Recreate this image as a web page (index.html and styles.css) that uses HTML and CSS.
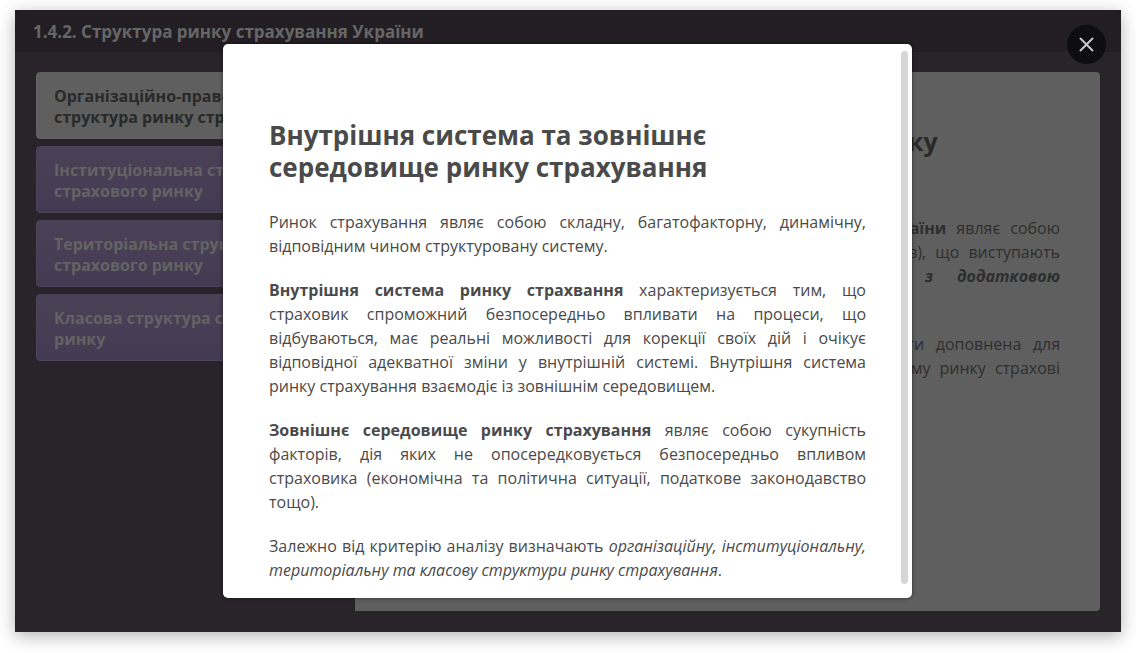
FILE: index.html
```html
<!DOCTYPE html>
<html lang="uk">
<head>
<meta charset="utf-8">
<meta name="viewport" content="width=device-width, initial-scale=1">
<title>Структура ринку страхування України</title>
<link rel="stylesheet" href="styles.css">
</head>
<body>
<div class="stage">
  <header class="topbar">1.4.2. Структура ринку страхування України</header>
  <main class="content">
    <nav class="tabs">
      <button class="tab tab-active" type="button">Організаційно-правова<br>структура ринку страхування</button>
      <button class="tab" type="button">Інституціональна структура<br>страхового ринку</button>
      <button class="tab" type="button">Територіальна структура<br>страхового ринку</button>
      <button class="tab" type="button">Класова структура страхового<br>ринку</button>
    </nav>
    <article class="panel">
      <h1 class="panel-title">Організаційно–правова структура ринку<br>страхування</h1>
      <p class="panel-text"><span class="line"><b>Організаційно-правова структура ринку страхування України</b> являє собою</span>
        <span class="line">сукупність усіх різноманітних страхових компаній (страховиків), що виступають</span>
        <span class="line"><b><i>у формі повних, командитних товариств також з додатковою</i></b></span>
        <b><i>відповідальністю.</i></b></p>
      <p class="panel-text"><span class="line">Організаційна структура ринку страхування також може бути доповнена для</span>
        <span class="line">окремих видів нинішньої страхової діяльності; на вітчизняному ринку страхові</span>
        компанії.</p>
    </article>
  </main>

  <section class="modal" role="dialog" aria-modal="true" aria-labelledby="modal-title">
    <div class="modal-body">
      <h2 class="modal-title" id="modal-title">Внутрішня система та зовнішнє<br>середовище ринку страхування</h2>
      <p class="modal-text">Ринок страхування являє собою складну, багатофакторну, динамічну, відповідним чином структуровану систему.</p>
      <p class="modal-text"><b>Внутрішня система ринку страхвання</b> характеризується тим, що страховик спроможний безпосередньо впливати на процеси, що відбуваються, має реальні можливості для корекції своїх дій і очікує відповідної адекватної зміни у внутрішній системі. Внутрішня система ринку страхування взаємодіє із зовнішнім середовищем.</p>
      <p class="modal-text"><b>Зовнішнє середовище ринку страхування</b> являє собою сукупність факторів, дія яких не опосередковується безпосередньо впливом страховика (економічна та політична ситуації, податкове законодавство тощо).</p>
      <p class="modal-text">Залежно від критерію аналізу визначають <i>організаційну, інституціональну, територіальну та класову структури ринку страхування</i>.</p>
    </div>
    <div class="scrollbar"></div>
  </section>

  <button class="close" type="button" aria-label="Закрити">
    <svg width="15" height="15" viewBox="0 0 15 15" fill="none" stroke="currentColor" stroke-width="2" stroke-linecap="round"><path d="M1.5 1.5l12 12M13.5 1.5l-12 12"/></svg>
  </button>
</div>
</body>
</html>
```

FILE: styles.css
```css
* { box-sizing: border-box; }

body {
  margin: 0;
  padding: 10px 15px 21px;
  background: #fff;
  color: #4a4a4a;
  font-family: "Open Sans", "Noto Sans", sans-serif;
  font-size: 16px;
  line-height: 24px;
}

.stage {
  position: relative;
  display: flex;
  flex-direction: column;
  min-height: calc(100vh - 31px);
  background: #29242a;
  box-shadow: 0 4px 16px rgba(0, 0, 0, 0.3);
}

.topbar {
  padding: 10px 18px 8px;
  background: #231e23;
  color: #666;
  font-size: 17px;
  font-weight: 700;
}

.content {
  display: flex;
  flex: 1;
  padding: 20px 21px 21px;
}

.tabs {
  display: flex;
  flex: 0 0 319px;
  flex-direction: column;
  gap: 7px;
}

.tab {
  padding: 13px 17px 10px;
  border: 1px solid #4e4459;
  border-radius: 4px;
  background: linear-gradient(#4b4156, #443a53);
  color: #636363;
  font: 700 16px/21px "Open Sans", "Noto Sans", sans-serif;
  text-align: left;
  white-space: nowrap;
}

.tab-active {
  border-color: #626262;
  background: #5f5f5f;
  color: #292929;
}

.panel {
  flex: 1;
  padding: 53px 40px 0 46px;
  border-radius: 4px 4px 4px 0;
  background: #5f5f5f;
  color: #2e2e2e;
}

.panel-title {
  margin: 0 0 27px;
  color: #292929;
  font-size: 25px;
  line-height: 32px;
}

.panel-text {
  margin: 0 0 20px;
}

.line {
  display: block;
  text-align: justify;
  text-align-last: justify;
  white-space: nowrap;
}

.modal {
  position: absolute;
  inset: 34px 209px 34px 208px;
  display: flex;
  padding: 7px 4px 14px 46px;
  border-radius: 5px;
  background: #fff;
  box-shadow: 0 0 4px rgba(0, 0, 0, 0.5);
}

.modal-body {
  flex: 1;
  padding: 68px 35px 0 0;
}

.modal-title {
  margin: 0 0 27px;
  font-size: 26px;
  line-height: 32px;
}

.modal-text {
  margin: 0 0 20px;
  text-align: justify;
}

.scrollbar {
  width: 7px;
  border-radius: 4px;
  background: #d6d6d6;
}

.close {
  position: absolute;
  top: 15px;
  right: 15px;
  display: grid;
  place-items: center;
  width: 39px;
  height: 39px;
  padding: 0;
  border: 0;
  border-radius: 50%;
  background: #0e0d0f;
  color: #c8c8c8;
}
```
